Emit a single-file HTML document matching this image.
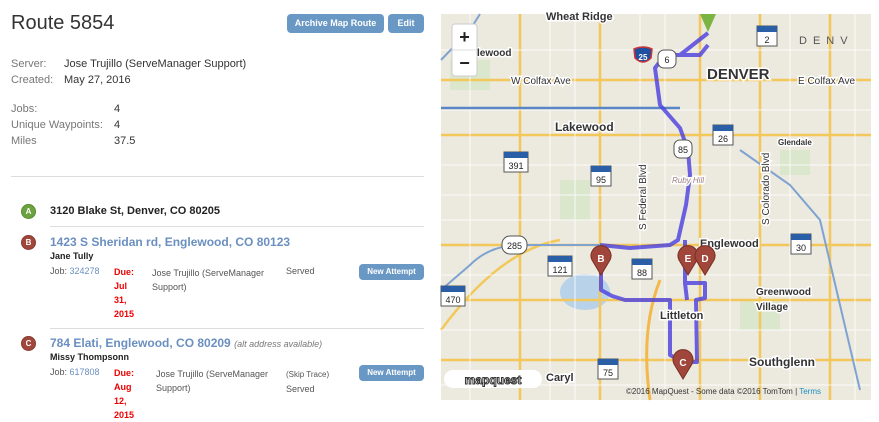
<!DOCTYPE html>
<html><head><meta charset="utf-8"><style>
*{box-sizing:border-box}
body{margin:0;width:879px;height:420px;overflow:hidden;background:#fff;font-family:"Liberation Sans",sans-serif;color:#333;position:relative}
.a{position:absolute;white-space:nowrap}
h1{position:absolute;left:11px;top:12px;margin:0;font-size:20px;font-weight:normal;color:#333}
.btn{position:absolute;background:#6a98c4;color:#fff;border-radius:4px;font-size:9px;font-weight:bold;text-align:center}
.lbl{color:#777;font-size:11px}
.val{color:#333;font-size:11px}
.pin{position:absolute;width:15px;height:15px;border-radius:50%;color:#fff;font-size:8px;font-weight:bold;text-align:center;line-height:15px;box-shadow:inset 0 0 0 1px rgba(0,0,0,.15)}
.addr{font-size:12px;font-weight:bold;color:#6a8fc0}
.sm{font-size:9px}
.red{color:#e00;font-weight:bold;font-size:9px;line-height:14px}
.hr{position:absolute;height:1px;background:#ddd}
</style></head><body>
<h1>Route 5854</h1>
<div class="btn" style="left:287px;top:14px;width:97px;height:19px;line-height:19px">Archive Map Route</div>
<div class="btn" style="left:388px;top:14px;width:36px;height:19px;line-height:19px">Edit</div>
<div class="a lbl" style="left:11px;top:58px">Server:</div><div class="a val" style="left:64px;top:58px">Jose Trujillo (ServeManager Support)</div>
<div class="a lbl" style="left:11px;top:74px">Created:</div><div class="a val" style="left:64px;top:74px">May 27, 2016</div>
<div class="a lbl" style="left:11px;top:103px">Jobs:</div><div class="a val" style="left:114px;top:103px">4</div>
<div class="a lbl" style="left:11px;top:119px">Unique Waypoints:</div><div class="a val" style="left:114px;top:119px">4</div>
<div class="a lbl" style="left:11px;top:135px">Miles</div><div class="a val" style="left:114px;top:135px">37.5</div>
<div class="hr" style="left:11px;top:176px;width:413px"></div>
<div class="pin" style="left:21px;top:204px;background:#6aa33f">A</div>
<div class="a" style="left:50px;top:205px;font-size:11px;font-weight:bold;color:#222">3120 Blake St, Denver, CO 80205</div>
<div class="hr" style="left:50px;top:226px;width:374px"></div>
<div class="pin" style="left:21px;top:235px;background:#a0463a">B</div>
<div class="a addr" style="left:50px;top:235px">1423 S Sheridan rd, Englewood, CO 80123</div>
<div class="a sm" style="left:50px;top:251px;font-weight:bold;color:#222">Jane Tully</div>
<div class="a sm" style="left:50px;top:266px;color:#555">Job: <span style="color:#6a8fc0">324278</span></div>
<div class="a red" style="left:114px;top:265px">Due:<br>Jul<br>31,<br>2015</div>
<div class="a sm" style="left:152px;top:266px;color:#555;line-height:14px">Jose Trujillo (ServeManager<br>Support)</div>
<div class="a sm" style="left:286px;top:266px;color:#555">Served</div>
<div class="btn" style="left:359px;top:264px;width:65px;height:16px;line-height:16px;font-size:8px">New Attempt</div>
<div class="hr" style="left:50px;top:328px;width:374px"></div>
<div class="pin" style="left:21px;top:336px;background:#a0463a">C</div>
<div class="a addr" style="left:50px;top:336px">784 Elati, Englewood, CO 80209 <i style="font-weight:normal;color:#777;font-size:9px">(alt address available)</i></div>
<div class="a sm" style="left:50px;top:352px;font-weight:bold;color:#222">Missy Thompsonn</div>
<div class="a sm" style="left:50px;top:367px;color:#555">Job: <span style="color:#6a8fc0">617808</span></div>
<div class="a red" style="left:114px;top:366px">Due:<br>Aug<br>12,<br>2015</div>
<div class="a sm" style="left:156px;top:367px;color:#555;line-height:14px">Jose Trujillo (ServeManager<br>Support)</div>
<div class="a" style="left:286px;top:368px;color:#555;font-size:8px;line-height:14px">(Skip Trace)<br><span style="font-size:9px">Served</span></div>
<div class="btn" style="left:359px;top:365px;width:65px;height:16px;line-height:16px;font-size:8px">New Attempt</div>

<svg style="position:absolute;left:0;top:0" width="879" height="420" font-family="Liberation Sans,sans-serif">
<rect x="441" y="14" width="430" height="386" fill="#ece9df"/>
<g fill="#d4e6c4" opacity=".7"><rect x="450" y="60" width="40" height="30"/><rect x="560" y="180" width="30" height="40"/><rect x="740" y="300" width="40" height="30"/><rect x="780" y="150" width="30" height="25"/></g>
<ellipse cx="585" cy="292" rx="25" ry="18" fill="#b8d2ea"/>
<g stroke="#f3c85a" stroke-width="2.5" fill="none">
<path d="M441 80 L871 80"/><path d="M441 135 L871 135"/><path d="M441 245 L871 245"/><path d="M441 300 L871 300"/><path d="M441 360 L871 360"/>
<path d="M520 14 V400"/><path d="M600 14 V400"/><path d="M700 14 V400"/><path d="M760 14 V400"/><path d="M830 14 V400"/>
<path d="M441 330 Q500 250 560 240"/>
</g>
<g stroke="#fff" stroke-width="1" fill="none" opacity=".8">
<path d="M441 50 H871 M441 110 H871 M441 165 H871 M441 195 H871 M441 220 H871 M441 275 H871 M441 330 H871 M441 385 H871"/>
<path d="M470 14 V400 M550 14 V400 M575 14 V400 M640 14 V400 M665 14 V400 M730 14 V400 M790 14 V400 M855 14 V400"/>
</g>
<path d="M441 108 H680" stroke="#5b86c6" stroke-width="2.5" fill="none"/>
<path d="M441 290 L470 265 Q490 245 520 245 H600" stroke="#7fa3d0" stroke-width="2" fill="none"/>
<path d="M740 150 L790 185 L820 220 L860 390" stroke="#7fa3d0" stroke-width="2" fill="none"/>
<path d="M441 60 L470 30 L480 14" stroke="#7fa3d0" stroke-width="2" fill="none"/>
<path d="M660 280 Q640 330 650 400" stroke="#f3b84a" stroke-width="3" fill="none"/>
<g stroke="#4a3fe0" stroke-width="4" fill="none" opacity=".8" stroke-linejoin="round">
<path d="M708 33 L680 55 L665 55 L655 68 L660 105 L680 128 L688 150 L690 175 L686 205 L678 240 L670 245 L630 248 L600 245"/>
<path d="M601 260 L601 290 L612 296 L625 300 L670 300 L670 355 L683 362 L697 362 L696 300 L705 298 L705 283 L685 283 L685 240"/>
<path d="M685 283 L687 300"/>
<path d="M665 55 L700 55 L708 45"/>
</g>
<g font-weight="bold" fill="#333" stroke="#fff" stroke-width="3" paint-order="stroke">
<text x="707" y="79" font-size="15">DENVER</text>
<text x="555" y="131" font-size="12">Lakewood</text>
<text x="700" y="247" font-size="11">Englewood</text>
<text x="660" y="319" font-size="11">Littleton</text>
<text x="749" y="366" font-size="12">Southglenn</text>
<text x="756" y="295" font-size="10">Greenwood</text>
<text x="756" y="310" font-size="10">Village</text>
<text x="546" y="381" font-size="11">Caryl</text>
<text x="546" y="20" font-size="11">Wheat Ridge</text>
<text x="477" y="56" font-size="10">lewood</text>
<text x="778" y="145" font-size="8">Glendale</text>
</g>
<g fill="#333" stroke="#fff" stroke-width="3" paint-order="stroke" font-size="10">
<text x="511" y="84">W Colfax Ave</text><text x="798" y="84">E Colfax Ave</text>
<text x="672" y="183" fill="#a08080" font-style="italic" font-size="8">Ruby Hill</text>
<text transform="translate(646,230) rotate(-90)">S Federal Blvd</text>
<text transform="translate(769,225) rotate(-90)">S Colorado Blvd</text>
</g>
<g font-size="9" text-anchor="middle" fill="#222">
<g transform="translate(757,26)"><rect width="20" height="20" fill="#fff" stroke="#555"/><rect width="20" height="6" fill="#2a5fa8"/><text x="10" y="17">2</text></g>
<g transform="translate(713,125)"><rect width="20" height="20" fill="#fff" stroke="#555"/><rect width="20" height="6" fill="#2a5fa8"/><text x="10" y="17">26</text></g>
<g transform="translate(504,152)"><rect width="24" height="20" fill="#fff" stroke="#555"/><rect width="24" height="6" fill="#2a5fa8"/><text x="12" y="17">391</text></g>
<g transform="translate(591,166)"><rect width="20" height="20" fill="#fff" stroke="#555"/><rect width="20" height="6" fill="#2a5fa8"/><text x="10" y="17">95</text></g>
<g transform="translate(548,256)"><rect width="24" height="20" fill="#fff" stroke="#555"/><rect width="24" height="6" fill="#2a5fa8"/><text x="12" y="17">121</text></g>
<g transform="translate(632,259)"><rect width="20" height="20" fill="#fff" stroke="#555"/><rect width="20" height="6" fill="#2a5fa8"/><text x="10" y="17">88</text></g>
<g transform="translate(791,234)"><rect width="20" height="20" fill="#fff" stroke="#555"/><rect width="20" height="6" fill="#2a5fa8"/><text x="10" y="17">30</text></g>
<g transform="translate(441,286)"><rect width="24" height="20" fill="#fff" stroke="#555"/><rect width="24" height="6" fill="#2a5fa8"/><text x="12" y="17">470</text></g>
<g transform="translate(598,359)"><rect width="20" height="20" fill="#fff" stroke="#555"/><rect width="20" height="6" fill="#2a5fa8"/><text x="10" y="17">75</text></g>
<g transform="translate(502,236)"><rect width="25" height="18" rx="8" fill="#fff" stroke="#555"/><text x="12.5" y="13">285</text></g>
<g transform="translate(674,140)"><rect width="18" height="18" rx="6" fill="#fff" stroke="#555"/><text x="9" y="13">85</text></g>
<g transform="translate(658,50)"><rect width="18" height="18" rx="6" fill="#fff" stroke="#555"/><text x="9" y="13">6</text></g>
<g transform="translate(634,46)"><path d="M0 3 Q9 -1 18 3 L17 12 Q9 20 1 12 Z" fill="#1f4fa0" stroke="#c33" stroke-width="1.5"/><text x="9" y="14" fill="#fff" font-size="8" font-weight="bold">25</text></g>
</g>
<text x="799" y="44" font-size="11" fill="#555" letter-spacing="6">DENV</text>
<g font-size="10" font-weight="bold" fill="#fff" text-anchor="middle">
<path d="M601 275 L592 260 A10 10 0 1 1 610 260 Z" fill="#a0463a" stroke="#7a2e25"/><text x="601" y="262">B</text>
<path d="M688 275 L679 260 A10 10 0 1 1 697 260 Z" fill="#a0463a" stroke="#7a2e25"/><text x="688" y="262">E</text>
<path d="M705 275 L696 260 A10 10 0 1 1 714 260 Z" fill="#a0463a" stroke="#7a2e25"/><text x="705" y="262">D</text>
<path d="M683 379 L674 364 A10 10 0 1 1 692 364 Z" fill="#a0463a" stroke="#7a2e25"/><text x="683" y="366">C</text>
<path d="M708 32 L700 14 L716 14 Z" fill="#7bb443"/>
</g>
<rect x="452" y="24" width="25" height="52" rx="3" fill="#fff" stroke="#ccc"/>
<line x1="452" y1="50" x2="477" y2="50" stroke="#ddd"/>
<text x="464.5" y="43" font-size="18" text-anchor="middle" fill="#222" font-weight="bold">+</text>
<text x="464.5" y="69" font-size="18" text-anchor="middle" fill="#222" font-weight="bold">−</text>
<rect x="444" y="370" width="98" height="18" rx="9" fill="#fff"/>
<text x="493" y="384" font-size="12" font-weight="bold" text-anchor="middle" fill="#fff" stroke="#333" stroke-width="1">mapquest</text>
<text x="626" y="394" font-size="8" fill="#333">©2016 MapQuest  -  Some data ©2016 TomTom | <tspan fill="#1a8fc0">Terms</tspan></text>
</svg>
</body></html>
